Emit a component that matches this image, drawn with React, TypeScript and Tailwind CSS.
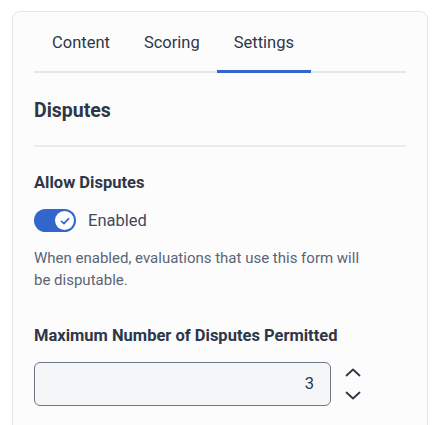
import { useState } from "react";

export default function App() {
  const [enabled, setEnabled] = useState(true);
  const [count, setCount] = useState(3);
  const tabs = ["Content", "Scoring", "Settings"];
  const active = "Settings";

  return (
    <div className="h-[425px] overflow-hidden bg-white pl-3 pr-[17px] pt-[11px]" style={{ fontFamily: "Roboto, 'Noto Sans', sans-serif" }}>
      <div className="h-[440px] rounded-lg border border-[#e3e7ee] bg-[#fcfcfd] px-[21px]">
        {/* Tabs */}
        <div className="flex border-b-2 border-[#e4e8ee] pl-[1px]">
          {tabs.map((t) => (
            <button
              key={t}
              className={`-mb-[2px] px-[17px] pb-[17px] pt-[21px] text-[16.5px] leading-[20px] text-[#2d3748] ${
                t === active ? "border-b-[3px] border-[#3366cc]" : "border-b-[3px] border-transparent"
              }`}
            >
              {t}
            </button>
          ))}
        </div>

        <h2 className="pb-[21px] pt-[25px] text-[19.5px] font-bold leading-[26px] text-[#2d3748]">Disputes</h2>
        <div className="h-[2px] bg-[#e8ebf0]" />

        {/* Allow disputes */}
        <div className="pt-[26px]">
          <p className="text-[16.5px] font-bold leading-[20px] text-[#2d3748]">Allow Disputes</p>
          <div className="mt-[16px] flex items-center gap-3">
            <button
              onClick={() => setEnabled(!enabled)}
              className={`flex h-[23px] w-[42px] items-center rounded-full px-[2px] ${enabled ? "justify-end bg-[#3366cc]" : "justify-start bg-gray-300"}`}
            >
              <span className="flex h-[19px] w-[19px] items-center justify-center rounded-full bg-white">
                {enabled && (
                  <svg width="12" height="12" viewBox="0 0 12 12" fill="none" stroke="#3366cc" strokeWidth="1.6" strokeLinecap="round" strokeLinejoin="round">
                    <path d="M2.5 6.3 L5 8.6 L9.6 3.6" />
                  </svg>
                )}
              </span>
            </button>
            <span className="text-[16.5px] leading-[20px] text-[#404a5a]">Enabled</span>
          </div>
          <p className="mt-[15px] w-[340px] text-[15px] leading-[22px] text-[#5b6475]">
            When enabled, evaluations that use this form will be disputable.
          </p>
        </div>

        {/* Max number */}
        <div className="pt-[35px]">
          <p className="text-[16.5px] font-bold leading-[20px] text-[#2d3748]">Maximum Number of Disputes Permitted</p>
          <div className="mt-[16px] flex items-center">
            <div className="flex h-[44px] w-[297px] items-center justify-end rounded-md border border-[#6f7785] bg-[#f5f6f8] px-[16px] text-[16.5px] text-[#2d3748]">
              {count}
            </div>
            <div className="ml-[14px] flex flex-col items-center gap-[14px]">
              <button onClick={() => setCount(count + 1)} className="text-[#2d3748]">
                <svg width="16" height="9" viewBox="0 0 16 9" fill="none" stroke="currentColor" strokeWidth="1.8" strokeLinecap="round" strokeLinejoin="round">
                  <path d="M1.5 7.5 L8 1.5 L14.5 7.5" />
                </svg>
              </button>
              <button onClick={() => setCount(Math.max(0, count - 1))} className="text-[#2d3748]">
                <svg width="16" height="9" viewBox="0 0 16 9" fill="none" stroke="currentColor" strokeWidth="1.8" strokeLinecap="round" strokeLinejoin="round">
                  <path d="M1.5 1.5 L8 7.5 L14.5 1.5" />
                </svg>
              </button>
            </div>
          </div>
        </div>
      </div>
    </div>
  );
}
